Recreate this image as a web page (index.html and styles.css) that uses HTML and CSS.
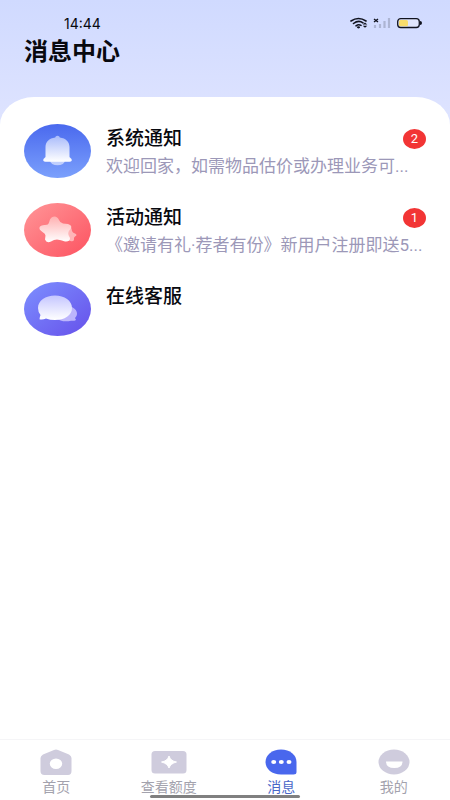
FILE: index.html
```html
<!DOCTYPE html>
<html lang="zh-CN">
<head>
<meta charset="utf-8">
<meta name="viewport" content="width=device-width, initial-scale=1">
<title>消息中心</title>
<link rel="stylesheet" href="styles.css">
</head>
<body>
<div class="app">
  <header class="header">
    <div class="status">
      <time>14:44</time>
      <svg class="status-icons" width="72" height="12" viewBox="0 0 72 12" aria-hidden="true">
        <g fill="none" stroke="#11131f" stroke-width="1.6" stroke-linecap="round">
          <path d="M1 4Q8.500-1 16 4M3.500 6.500Q8.500 2.500 13 5.800M6 8.800Q8.500 7 11 8.400"/>
        </g>
        <ellipse cx="8.500" cy="10.300" rx="1.600" ry="1.100" fill="#11131f"/>
        <path d="M12.700 7.500L15 5.500L17.300 7.500ZM12.700 8.800L15 10.800L17.300 8.800Z" fill="#11131f"/>
        <path d="M24 2L28 5M28 2L24 5" stroke="#11131f" stroke-width="1.400"/>
        <path d="M25 8V11M30 7V11M34.500 4V11M39 1V11" stroke="#adb5d3" stroke-width="2.200"/>
        <rect x="47.700" y="1.700" width="21.600" height="8.800" rx="3" fill="#dfe4fb" stroke="#11131f" stroke-width="1.300"/>
        <rect x="49" y="3" width="9" height="6.200" rx="1.500" fill="#f8dc6c"/>
        <path d="M70 4Q72 4 72 6T70 8Z" fill="#11131f"/>
      </svg>
    </div>
    <h1 class="title">消息中心</h1>
  </header>
  <main class="panel">
    <a class="item" href="#system">
      <svg class="avatar" viewBox="0 0 67 54" aria-hidden="true">
        <defs>
          <linearGradient id="blue" x1="0" y1="0" x2="0" y2="1"><stop offset="0" stop-color="#4a69ee"/><stop offset="1" stop-color="#7ba0fc"/></linearGradient>
          <linearGradient id="bell" x1="0" y1="0" x2="0" y2="1"><stop offset="0" stop-color="#a9bbfb"/><stop offset="1" stop-color="#fff"/></linearGradient>
        </defs>
        <ellipse cx="33.500" cy="27" rx="33.500" ry="27" fill="url(#blue)"/>
        <ellipse cx="33.500" cy="36.500" rx="7.500" ry="4.800" fill="#c0cffd"/>
        <path d="M33.500 11.800Q35.500 11.800 35.800 13.500C42 14.300 45.500 18 45.500 23V33L47.500 35Q48.500 37.800 45.500 37.800H21.500Q18.500 37.800 19.500 35L21.500 33V23C21.500 18 25 14.300 31.200 13.500Q31.500 11.800 33.500 11.800Z" fill="url(#bell)"/>
      </svg>
      <div class="body">
        <div class="row"><h2 class="name">系统通知</h2><span class="badge">2</span></div>
        <p class="desc">欢迎回家，如需物品估价或办理业务可...</p>
      </div>
    </a>
    <a class="item" href="#activity">
      <svg class="avatar" viewBox="0 0 67 54" aria-hidden="true">
        <defs>
          <linearGradient id="red" x1="0" y1="0" x2="1" y2="1"><stop offset="0" stop-color="#ff9698"/><stop offset="1" stop-color="#fd5260"/></linearGradient>
          <linearGradient id="star" x1="0" y1="0" x2="0" y2="1"><stop offset="0" stop-color="#ffb0b1"/><stop offset="1" stop-color="#fff"/></linearGradient>
        </defs>
        <ellipse cx="33.500" cy="27" rx="33.500" ry="27" fill="url(#red)"/>
        <path d="M46 24Q48 25 48 28Q48.500 29.500 51 30.500Q54 32 51 33.500Q49.500 34.500 50 36.500Q50 39 46.500 38L41 36Z" fill="#ffb5b8"/>
        <path d="M26 16.500Q27.500 13.500 30.500 13.500Q33.500 13.500 35 17Q36 20 39 20.500L44 21Q49 22.500 46.500 26Q43.500 29 44.500 32L46 35Q46 39 41 38.500Q37 37 33 36.500Q30 36.500 27 38.500Q22.500 40.500 21 36.500L21.500 32.500Q21.500 30.500 18.500 29Q14 26 16 23.500Q17.500 21.800 21 22Q24.500 22 25 19.500Z" fill="url(#star)"/>
      </svg>
      <div class="body">
        <div class="row"><h2 class="name">活动通知</h2><span class="badge">1</span></div>
        <p class="desc">《邀请有礼·荐者有份》新用户注册即送5...</p>
      </div>
    </a>
    <a class="item" href="#service">
      <svg class="avatar" viewBox="0 0 67 54" aria-hidden="true">
        <defs>
          <linearGradient id="violet" x1="0" y1="0" x2="1" y2="1"><stop offset="0" stop-color="#7d90ff"/><stop offset="1" stop-color="#6650ea"/></linearGradient>
          <linearGradient id="chat" x1="0" y1="0" x2="0" y2="1"><stop offset="0" stop-color="#c5c6ff"/><stop offset="1" stop-color="#fff"/></linearGradient>
        </defs>
        <ellipse cx="33.500" cy="27" rx="33.500" ry="27" fill="url(#violet)"/>
        <path d="M44 24C50 25 53 28 53 32Q53 34 51 36L52 38Q50 39.200 47 38.700C42 40 36 39.500 32 36Z" fill="#bdb5fc"/>
        <path d="M31 13.500C40.500 13.500 48 18.500 48 26S40.500 38 31 38Q26 38 22 36.500Q18.500 38 15.500 37.200Q15.500 35.500 16.500 33Q14 30 14 26C14 18.500 21.500 13.500 31 13.500Z" fill="url(#chat)"/>
      </svg>
      <div class="body">
        <div class="row"><h2 class="name">在线客服</h2></div>
      </div>
    </a>
  </main>
  <nav class="tabs">
    <a class="tab" href="#home">
      <svg width="36" height="26" viewBox="0 0 36 26" aria-hidden="true"><path fill-rule="evenodd" d="M16 1Q18 0 20 1L31 5.500Q33.500 7 33.500 9V22Q33.500 26 30 26H6.500Q2.500 26 2.500 22V9Q2.500 7 5 5.500ZM18 9.500A6.200 5.200 0 1 0 18 19.900A6.200 5.200 0 1 0 18 9.500Z" fill="#cfccdd"/></svg>
      <span>首页</span>
    </a>
    <a class="tab" href="#quota">
      <svg width="36" height="26" viewBox="0 0 36 26" aria-hidden="true"><rect x="0.500" y="2" width="35" height="22.500" rx="3.500" fill="#cfccdd"/><path d="M18 7Q19.500 12 25.500 13Q19.500 14.500 18 19Q16.500 14.500 10.500 13Q16.500 12 18 7Z" fill="#fff" stroke="#fff" stroke-width="1" stroke-linejoin="round"/></svg>
      <span>查看额度</span>
    </a>
    <a class="tab active" href="#messages" aria-current="page">
      <svg width="36" height="26" viewBox="0 0 36 26" aria-hidden="true"><path d="M18 0.500C27 0.500 33.500 6 33.500 13V23Q33.500 25.500 30.500 25.500H18C9 25.500 2.500 20 2.500 13S9 0.500 18 0.500Z" fill="#4967ed"/><g fill="#fff"><ellipse cx="10.700" cy="13" rx="2.500" ry="2"/><ellipse cx="18.300" cy="13" rx="2.500" ry="2"/><ellipse cx="26" cy="13" rx="2.500" ry="2"/></g></svg>
      <span>消息</span>
    </a>
    <a class="tab" href="#me">
      <svg width="36" height="26" viewBox="0 0 36 26" aria-hidden="true"><ellipse cx="18" cy="13" rx="15.500" ry="12.500" fill="#cfccdd"/><path d="M10 12.500H26.500Q26.500 19 18.300 19T10 12.500Z" fill="#fff"/></svg>
      <span>我的</span>
    </a>
    <div class="home-bar"></div>
  </nav>
</div>
</body>
</html>
```
FILE: styles.css
```css
* { box-sizing: border-box; }
body {
  margin: 0;
  background: #fff;
  color: #08090f;
  font-family: Roboto, "Noto Sans CJK SC", sans-serif;
}
h1, h2, p { margin: 0; }
a { color: inherit; text-decoration: none; }
.app {
  min-height: 100vh;
  display: flex;
  flex-direction: column;
  background: linear-gradient(#d0daff, #dfe4ff 128px);
}
.header { padding: 12px 24px 26px; }
.status {
  display: flex;
  justify-content: space-between;
  align-items: center;
  height: 22px;
  padding: 0 4px 0 40px;
  font-family: Inter, sans-serif;
  font-size: 14px;
}
.title {
  font-size: 24px;
  line-height: 37px;
  font-weight: 700;
}
.panel {
  flex: 1;
  display: flex;
  flex-direction: column;
  gap: 23px;
  padding: 27px 24px;
  background: #fff;
  border-radius: 34px 34px 0 0 / 28px 28px 0 0;
}
.item { display: flex; gap: 15px; }
.avatar { flex: none; width: 67px; height: 54px; }
.body { flex: 1; min-width: 0; padding-top: 1px; }
.row {
  display: flex;
  justify-content: space-between;
  align-items: center;
  height: 28px;
}
.name { font-size: 19px; line-height: 28px; font-weight: 500; }
.badge {
  width: 23px;
  height: 20px;
  border-radius: 50%;
  background: #f23535;
  color: #fff;
  font-size: 13px;
  line-height: 20px;
  text-align: center;
}
.desc {
  color: #9c98b8;
  font-size: 17px;
  line-height: 27px;
  white-space: nowrap;
  overflow: hidden;
  text-overflow: ellipsis;
}
.tabs {
  position: relative;
  display: grid;
  grid-template-columns: repeat(4, 1fr);
  height: 61px;
  padding-top: 9px;
  border-top: 1px solid #f5f5f7;
  background: #fff;
}
.tab {
  display: flex;
  flex-direction: column;
  align-items: center;
  gap: 2px;
  color: #a3a2ad;
  font-size: 14px;
  line-height: 20px;
}
.tab svg { flex: none; }
.active { color: #4967c8; }
.home-bar {
  position: absolute;
  left: 33.333%;
  right: 33.333%;
  bottom: 2px;
  height: 3px;
  border-radius: 2px;
  background: #808080;
}
```
